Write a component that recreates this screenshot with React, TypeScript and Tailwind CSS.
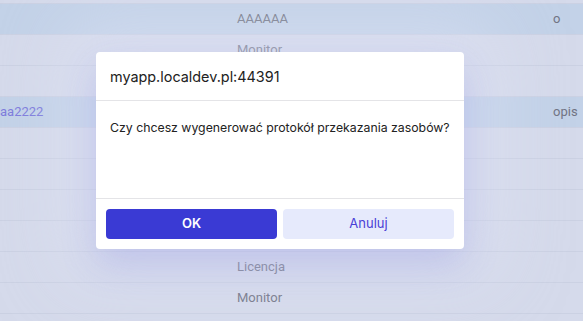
import React from "react"

type Row = { h: number; hl?: boolean; a?: string; b?: string; c?: string }

const rows: Row[] = [
  { h: 4 },
  { h: 31, hl: true, b: "AAAAAA", c: "o" },
  { h: 31, b: "Monitor" },
  { h: 31 },
  { h: 31, hl: true, a: "aa2222", c: "opis" },
  { h: 31 },
  { h: 31 },
  { h: 31 },
  { h: 31 },
  { h: 31, b: "Licencja" },
  { h: 31, b: "Monitor" },
  { h: 31 },
]

export default function App() {
  return (
    <div
      className="relative h-[321px] w-[583px] overflow-hidden bg-[#d5daeb]"
      style={{ fontFamily: "Roboto, 'Liberation Sans', sans-serif" }}
    >
      {/* table behind the dialog */}
      <div className="flex flex-col">
        {rows.map((r, i) => (
          <div
            key={i}
            className={`flex items-center border-b border-[#cbd1e3] text-[13px] text-[#717484] ${r.hl ? "bg-[#c3d2e8]" : "bg-[#d5daeb]"}`}
            style={{ height: r.h }}
          >
            <div className="w-[237px] shrink-0 text-[#7d7bdc]">{r.a}</div>
            <div className="w-[316px] shrink-0">{r.b}</div>
            <div className="flex-1">{r.c}</div>
          </div>
        ))}
      </div>

      {/* dialog */}
      <div
        className="absolute left-[96px] top-[52px] flex w-[368px] flex-col rounded-[4px] bg-white shadow-[0_16px_36px_rgba(80,80,210,0.18),0_0_70px_28px_rgba(226,229,247,0.5)]"
        style={{ fontFamily: "Inter, 'Noto Sans', sans-serif" }}
      >
        <div className="flex h-[49px] items-center border-b border-[#e4e4e7] px-[14px] pt-[1px] text-[14.4px] text-[#222]">
          myapp.localdev.pl:44391
        </div>
        <div className="h-[98px] whitespace-nowrap border-b border-[#e4e4e7] px-[14px] pt-[18px] text-[12.3px] text-[#222]">
          Czy chcesz wygenerować protokół przekazania zasobów?
        </div>
        <div className="flex gap-[6px] px-[10px] py-[10px]">
          <button className="h-[30px] flex-1 rounded-[4px] bg-[#3a3ad4] text-[13px] font-semibold text-white">
            OK
          </button>
          <button className="h-[30px] flex-1 rounded-[4px] bg-[#e6eafc] text-[13px] font-normal text-[#4a3fd6]">
            Anuluj
          </button>
        </div>
      </div>
    </div>
  )
}
